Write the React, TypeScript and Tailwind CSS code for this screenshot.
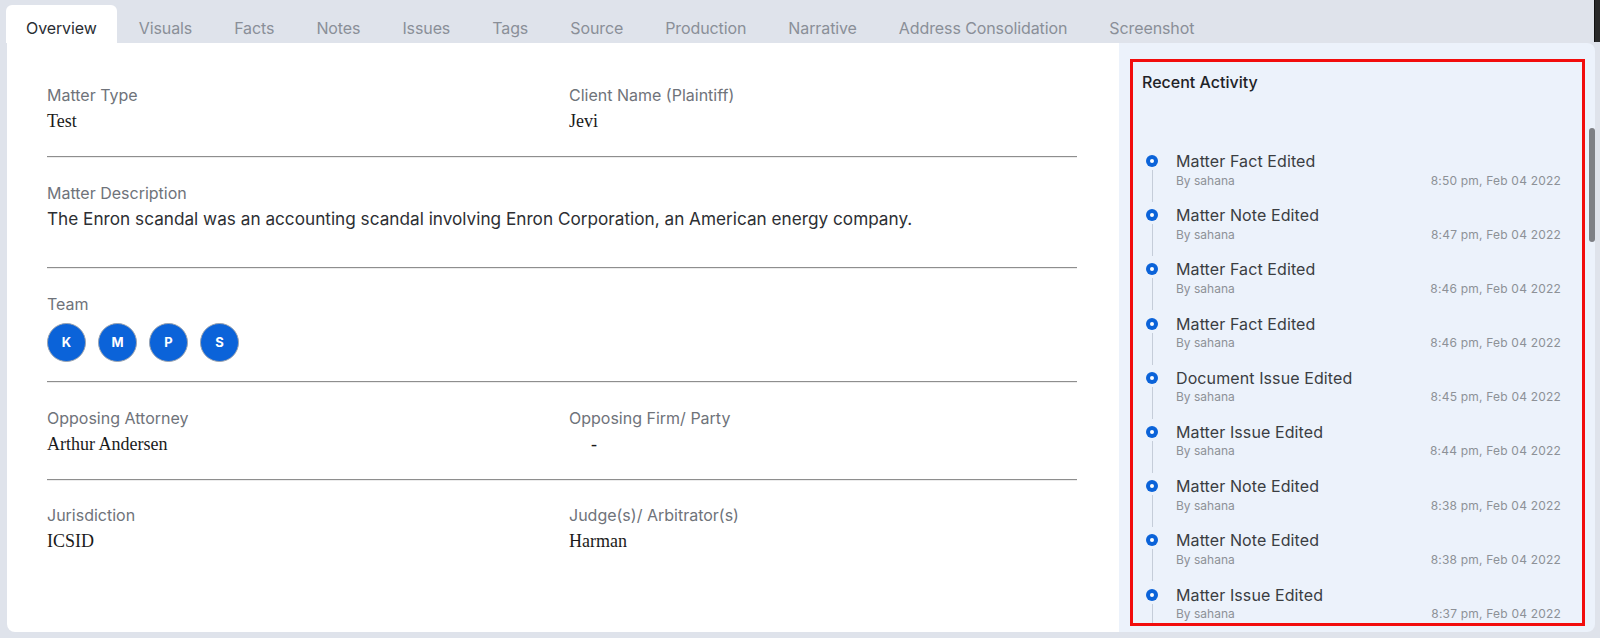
import React from 'react';

const tabs = [
  'Overview',
  'Visuals',
  'Facts',
  'Notes',
  'Issues',
  'Tags',
  'Source',
  'Production',
  'Narrative',
  'Address Consolidation',
  'Screenshot',
];

const activity = [
  { title: 'Matter Fact Edited', time: '8:50 pm, Feb 04 2022' },
  { title: 'Matter Note Edited', time: '8:47 pm, Feb 04 2022' },
  { title: 'Matter Fact Edited', time: '8:46 pm, Feb 04 2022' },
  { title: 'Matter Fact Edited', time: '8:46 pm, Feb 04 2022' },
  { title: 'Document Issue Edited', time: '8:45 pm, Feb 04 2022' },
  { title: 'Matter Issue Edited', time: '8:44 pm, Feb 04 2022' },
  { title: 'Matter Note Edited', time: '8:38 pm, Feb 04 2022' },
  { title: 'Matter Note Edited', time: '8:38 pm, Feb 04 2022' },
  { title: 'Matter Issue Edited', time: '8:37 pm, Feb 04 2022' },
];

const team = ['K', 'M', 'P', 'S'];

const Divider = () => (
  <div className="h-[2px] border-t border-t-[#8e8e8e] border-b border-b-[#ececec]" />
);

const Label: React.FC<{ children: React.ReactNode }> = ({ children }) => (
  <div className="pt-[1px] text-[16px] leading-[20px] text-[#6f737a]">{children}</div>
);

const Value: React.FC<{ children: React.ReactNode; className?: string }> = ({ children, className }) => (
  <div className={`mt-[4px] font-['Liberation_Serif',serif] text-[18px] leading-[24px] text-[#1a1a1a] ${className ?? ''}`}>
    {children}
  </div>
);

export default function App() {
  return (
    <div className="w-[1600px] h-[638px] bg-[#dfe3eb] font-['Inter',sans-serif] flex flex-col overflow-hidden">
      {/* tab strip */}
      <div className="flex h-[43px] shrink-0">
        <div className="flex items-end pl-[6px] gap-[2px]">
          {tabs.map((t, i) => (
            <div
              key={t}
              className={`h-[38px] px-5 pt-[7px] flex items-center text-[16px] tracking-[-0.1px] rounded-t-md ${
                i === 0 ? 'bg-white text-[#2a2d33]' : 'text-[#8a8f98]'
              }`}
            >
              {t}
            </div>
          ))}
        </div>
        <div className="flex-1" />
        <div className="w-[6px] h-[42px] bg-[#2a2a2a] border-l border-[#111]" />
      </div>

      {/* card */}
      <div className="flex ml-[7px] mr-[5px] h-[589px] rounded-b-lg rounded-tr-lg overflow-hidden">
        {/* details */}
        <div className="w-[1112px] bg-white pl-[40px] pr-[42px] pt-[41px]">
          <div className="grid grid-cols-[522px_1fr] pb-[23px]">
            <div>
              <Label>Matter Type</Label>
              <Value>Test</Value>
            </div>
            <div>
              <Label>Client Name (Plaintiff)</Label>
              <Value>Jevi</Value>
            </div>
          </div>
          <Divider />

          <div className="pt-[24px] pb-[36px]">
            <Label>Matter Description</Label>
            <div className="mt-[4px] text-[17.2px] leading-[24px] text-[#2d2f33]">
              The Enron scandal was an accounting scandal involving Enron Corporation, an American energy company.
            </div>
          </div>
          <Divider />

          <div className="pt-[24px] pb-[19px]">
            <Label>Team</Label>
            <div className="mt-[9px] flex gap-[12px]">
              {team.map((m) => (
                <div
                  key={m}
                  className="w-[39px] h-[39px] rounded-full bg-[#0b63d9] border border-[#9aa3b0] flex items-center justify-center text-white text-[13px] font-bold"
                >
                  {m}
                </div>
              ))}
            </div>
          </div>
          <Divider />

          <div className="grid grid-cols-[522px_1fr] pt-[24px] pb-[23px]">
            <div>
              <Label>Opposing Attorney</Label>
              <Value>Arthur Andersen</Value>
            </div>
            <div>
              <Label>Opposing Firm/ Party</Label>
              <Value className="pl-[22px]">-</Value>
            </div>
          </div>
          <Divider />

          <div className="grid grid-cols-[522px_1fr] pt-[23px]">
            <div>
              <Label>Jurisdiction</Label>
              <Value>ICSID</Value>
            </div>
            <div>
              <Label>Judge(s)/ Arbitrator(s)</Label>
              <Value>Harman</Value>
            </div>
          </div>
        </div>

        {/* recent activity */}
        <div className="relative flex-1 bg-[#ecf2fb] pt-[16px] pl-[11px] pr-[10px]">
          <div className="h-[567px] border-[3px] border-[#f20d0d] overflow-hidden">
            <div className="pt-[10px] pl-[9px] text-[16px] leading-[20px] font-medium text-[#1f2328]">
              Recent Activity
            </div>
            <div className="mt-[59px] pl-[13px] pr-[21px]">
              {activity.map((a, i) => (
                <div key={i} className="flex h-[54.2px]">
                  <div className="w-[12px] flex flex-col items-center">
                    <div className="mt-[4px] w-[12px] h-[12px] rounded-full bg-[#0b63d9] flex items-center justify-center">
                      <div className="w-[4px] h-[4px] rounded-full bg-white" />
                    </div>
                    <div className="mt-[3px] w-px h-[32px] bg-[#c5cdd9]" />
                  </div>
                  <div className="flex-1 ml-[18px]">
                    <div className="text-[16px] leading-[20px] text-[#3a3d42] tracking-[0.1px]">{a.title}</div>
                    <div className="mt-[1.5px] flex justify-between text-[12px] leading-[16px] text-[#8d9197]">
                      <span>By sahana</span>
                      <span className="tracking-[0.2px]">{a.time}</span>
                    </div>
                  </div>
                </div>
              ))}
            </div>
          </div>
          {/* scrollbar thumb */}
          <div className="absolute right-0 top-[85px] w-[6px] h-[114px] rounded-full bg-[#7e8085]" />
        </div>
      </div>
    </div>
  );
}
